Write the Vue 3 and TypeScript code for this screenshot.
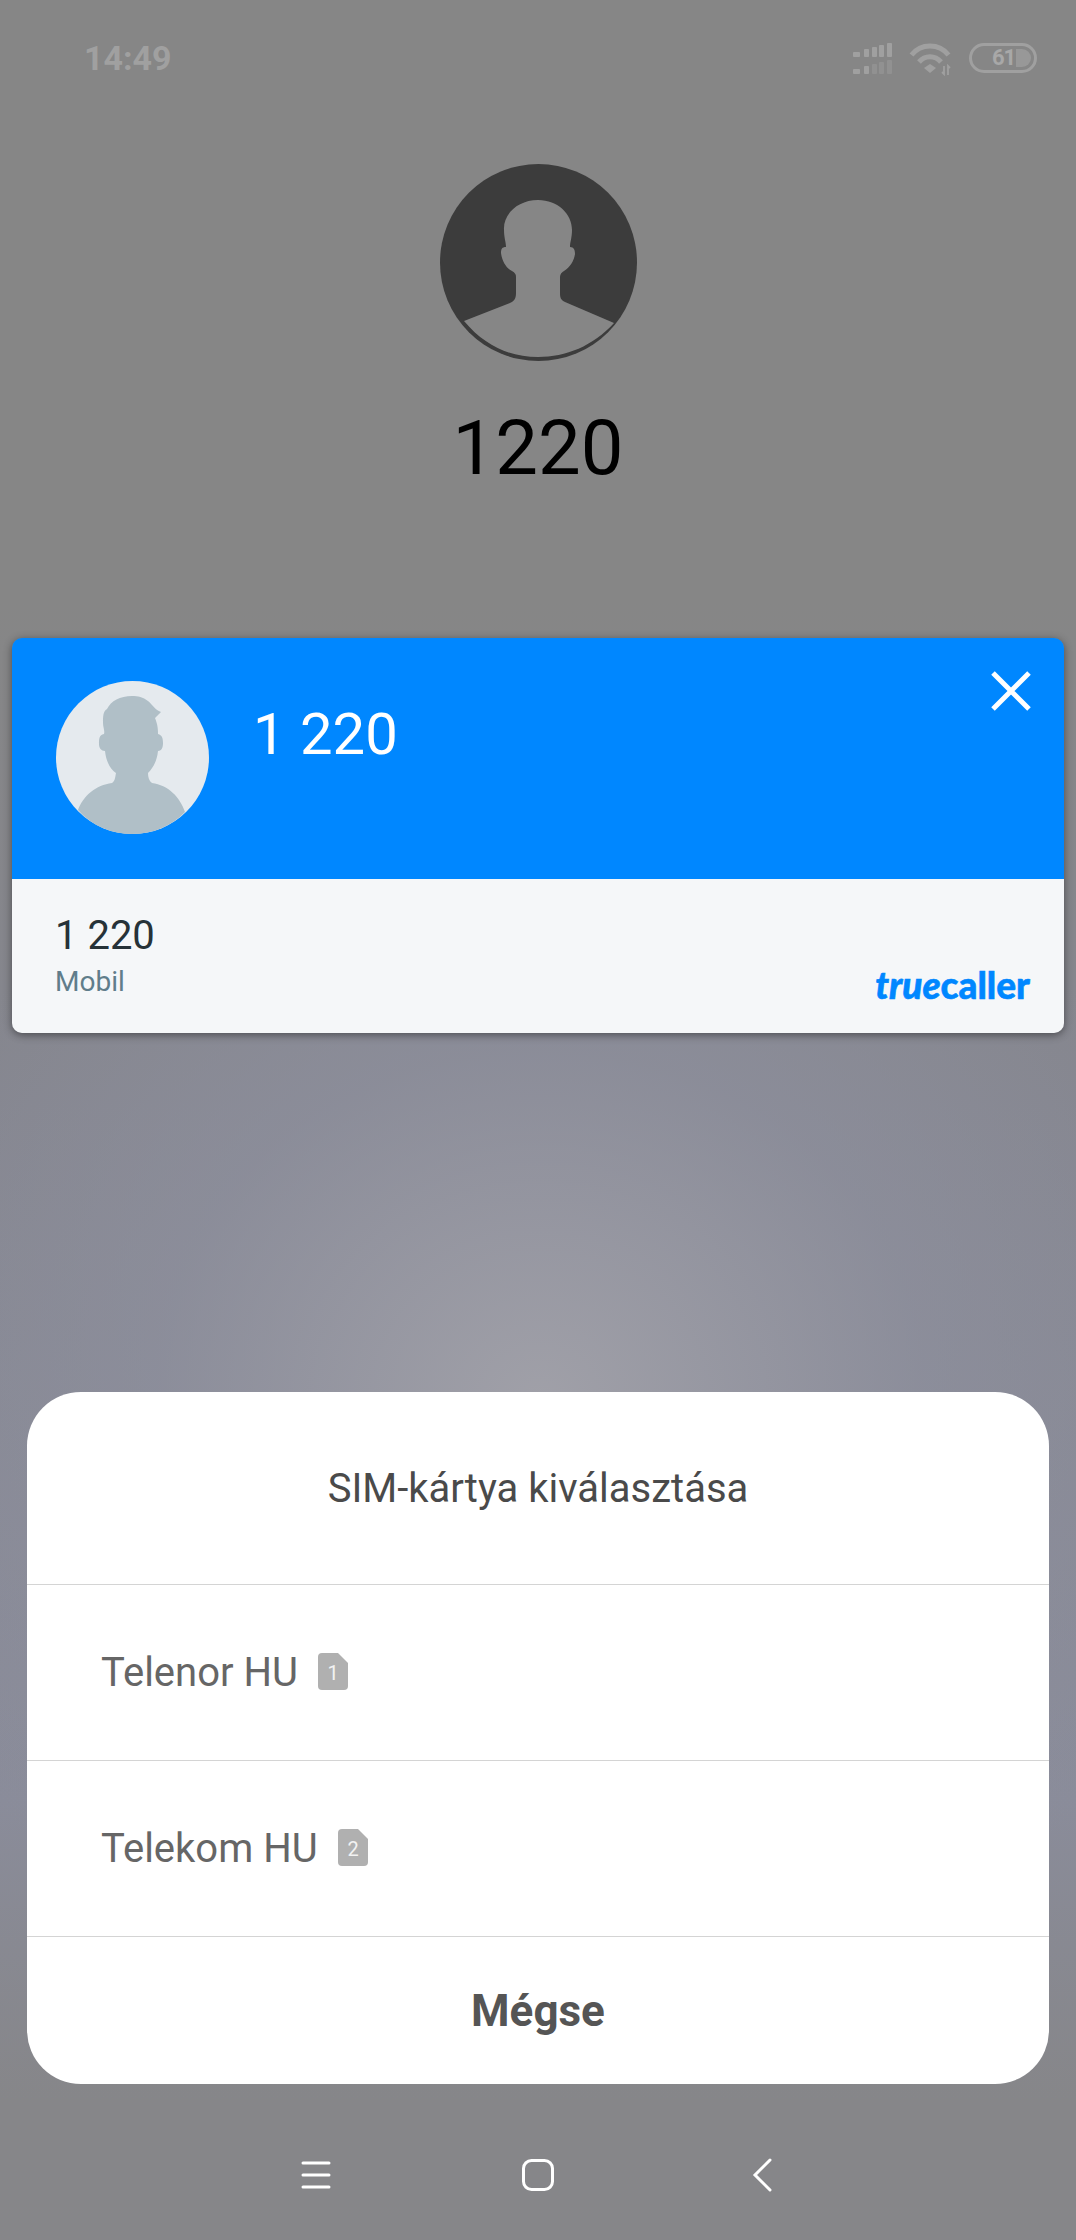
<template>
  <div class="screen">
    <div class="status-bar">
      <span class="clock">14:49</span>
      <div class="status-icons">
        <svg class="signal" width="40" height="32" viewBox="0 0 40 32" fill="#a0a0a0">
          <rect v-for="b in signalBars" :key="'a' + b.x" :x="b.x" :y="14 - b.h" :width="b.w" :height="b.h" rx="1" />
          <rect v-for="b in signalBars" :key="'b' + b.x" :x="b.x" :y="31 - b.h" :width="b.w" :height="b.h" rx="1" :opacity="b.x > 16 ? 0.45 : 1" />
        </svg>
        <svg class="wifi" width="44" height="34" viewBox="0 0 44 34" fill="none" stroke="#a0a0a0" stroke-width="5">
          <path d="M2.5 12C12 0 30 0 39.5 12" />
          <path d="M10 19C16 12 26 12 32 19" />
          <path d="M15 25L21 21L27 25L21 30Z" fill="#a0a0a0" stroke="none" />
          <path d="M35 23v8l-2 -2M39 32v-9l2 2" stroke-width="1.8" />
        </svg>
        <div class="battery">
          <span class="battery-fill"></span>
          <span class="battery-num">61</span>
        </div>
      </div>
    </div>

    <div class="caller">
      <svg class="caller-avatar" width="197" height="197" viewBox="0 0 197 197">
        <circle cx="98.5" cy="98.5" r="98.5" fill="#3c3c3c" />
        <path fill="#868686" d="M98 36C78 36 63 50 64 66C64 74 66 78 66 83C62 83 61 85 61 89C62 97 66 104 72 107C75 109 76 110 76 113V129C76 135 74 137 70 139L24 157C45 182 70 193 98 193C126 193 153 182 174 159L125 138C121 136 120 134 120 129V113C120 110 122 108 124 107C130 103 134 97 135 90C135 86 134 83 130 83C130 78 132 74 132 66C132 50 118 36 98 36Z" />
      </svg>
      <div class="caller-number">1220</div>
    </div>

    <div class="tc-card">
      <div class="tc-head">
        <svg class="tc-avatar" width="153" height="153" viewBox="0 0 153 153">
          <circle cx="76.5" cy="76.5" r="76.5" fill="#e5eaee" />
          <path fill="#b0bfc7" d="M76 15C64 15 55 20 51 28C47 30 47 36 47 42C47 46 49 50 48 53C43 54 43 58 43 63C43 67 45 70 49 70C50 80 54 88 60 92C59 97 59 100 56 102C40 104 27 115 22 129C36 145 56 153 76 153C97 153 116 145 129 131C124 116 112 104 96 102C93 100 92 96 92 92C97 87 101 80 102 70C106 70 107 66 107 62C107 57 106 54 102 53C102 46 101 42 99 37L105 31C99 29 97 24 92 20C87 16 82 15 76 15Z" />
        </svg>
        <span class="tc-name">1 220</span>
        <svg class="tc-close" width="40" height="40" viewBox="0 0 40 40" stroke="#fff" stroke-width="5">
          <path d="M2 2L38 38M38 2L2 38" />
        </svg>
      </div>
      <div class="tc-body">
        <div>
          <div class="tc-phone">1 220</div>
          <div class="tc-type">Mobil</div>
        </div>
        <span class="tc-logo"><i>true</i>caller</span>
      </div>
    </div>

    <div class="sim-dialog">
      <div class="sim-title">SIM-kártya kiválasztása</div>
      <div v-for="sim in sims" :key="sim.slot" class="sim-row">
        <span>{{ sim.name }}</span>
        <svg class="sim-badge" width="30" height="37" viewBox="0 0 30 37">
          <path fill="#b0b0b0" d="M4 0H20L30 10V33Q30 37 26 37H4Q0 37 0 33V4Q0 0 4 0Z" />
          <text x="15" y="27" text-anchor="middle" font-size="20" fill="#f2f2f2">{{ sim.slot }}</text>
        </svg>
      </div>
      <div class="sim-cancel">Mégse</div>
    </div>

    <div class="nav-bar">
      <svg width="30" height="28" viewBox="0 0 30 28" stroke="#fff" stroke-width="3" stroke-linecap="round">
        <path d="M2 2H28M2 14H28M2 26H28" />
      </svg>
      <svg width="32" height="32" viewBox="0 0 32 32" fill="none" stroke="#fff" stroke-width="3">
        <rect x="1.5" y="1.5" width="29" height="29" rx="8" />
      </svg>
      <svg width="20" height="34" viewBox="0 0 20 34" fill="none" stroke="#fff" stroke-width="3" stroke-linecap="round">
        <path d="M18 2L3 17L18 32" />
      </svg>
    </div>
  </div>
</template>

<script setup lang="ts">
const signalBars = [
  { x: 0, w: 7, h: 5 },
  { x: 11, w: 5, h: 8 },
  { x: 19, w: 5, h: 10 },
  { x: 26, w: 5, h: 12 },
  { x: 34, w: 5, h: 14 },
]

const sims = [
  { name: 'Telenor HU', slot: 1 },
  { name: 'Telekom HU', slot: 2 },
]
</script>

<style>
html, body { margin: 0; padding: 0; }
</style>

<style scoped>
.screen {
  width: 1076px; height: 2240px; overflow: hidden;
  display: flex; flex-direction: column; box-sizing: border-box;
  font-family: Roboto, "Liberation Sans", sans-serif;
  background:
    radial-gradient(ellipse 700px 640px at 540px 1400px, #a0a0a8 0%, rgba(142, 144, 158, 0.65) 55%, rgba(134, 135, 145, 0) 100%),
    linear-gradient(#868686 0, #868686 600px, #85868f 1100px, #8a8c9a 1800px, #868689 2100px);
}

.status-bar {
  height: 118px; flex: none; box-sizing: border-box;
  display: flex; justify-content: space-between; align-items: flex-start;
  padding: 38px 39px 0 84px;
}
.clock { font-size: 34px; font-weight: 700; line-height: 40px; color: #a0a0a0; }
.status-icons { display: flex; align-items: flex-start; padding-top: 5px; gap: 16px; }
.battery {
  position: relative; width: 68px; height: 30px; box-sizing: border-box;
  border: 3px solid #a0a0a0; border-radius: 15px;
}
.battery-fill { position: absolute; left: 44px; top: 3px; bottom: 3px; width: 15px; border-radius: 0 9px 9px 0; background: #989898; }
.battery-num {
  position: absolute; left: 20px; top: 0; font-size: 22px; font-weight: 700; line-height: 24px;
  color: #a8a8a8; letter-spacing: -1px;
}

.caller { display: flex; flex-direction: column; align-items: center; padding-top: 46px; height: 474px; box-sizing: border-box; }
.caller-number { font-size: 76px; line-height: 88px; color: #000; margin-top: 43px; }

.tc-card {
  margin: 46px 12px 0; height: 395px; flex: none; border-radius: 10px; overflow: hidden;
  box-shadow: 0 2px 8px rgba(0, 0, 0, 0.45);
}
.tc-head {
  position: relative; height: 241px; box-sizing: border-box; background: #0087ff;
  display: flex; align-items: flex-start; padding: 43px 0 0 44px;
}
.tc-name { font-size: 58px; line-height: 68px; color: #fff; margin: 19px 0 0 44px; }
.tc-close { position: absolute; right: 33px; top: 33px; }
.tc-body {
  height: 154px; box-sizing: border-box; background: #f5f7f9;
  display: flex; justify-content: space-between; align-items: flex-start; padding: 33px 34px 0 43px;
}
.tc-phone { font-size: 40px; line-height: 48px; color: #263238; }
.tc-type { font-size: 28px; line-height: 34px; color: #607d8b; margin-top: 5px; }
.tc-logo {
  margin-top: 51px; font-family: Lato, sans-serif; font-size: 37px; font-weight: 900; line-height: 44px;
  color: #0087ff; letter-spacing: 0; -webkit-text-stroke: 0.6px #0087ff;
}
.tc-logo i { font-style: italic; }

.sim-dialog {
  margin: 359px 27px 0; height: 692px; flex: none; border-radius: 54px; overflow: hidden;
  background: #fff; display: flex; flex-direction: column;
}
.sim-title {
  height: 192px; flex: none; box-sizing: border-box; padding-top: 73px;
  text-align: center; font-size: 40px; line-height: 48px; color: #4a4a4a;
}
.sim-row {
  height: 176px; flex: none; box-sizing: border-box; border-top: 1px solid #d4d4d4;
  display: flex; align-items: center; gap: 20px; padding-left: 74px;
  font-size: 40px; color: #666;
}
.sim-badge { margin-top: -3px; }
.sim-cancel {
  flex: 1; border-top: 1px solid #d4d4d4; display: flex; align-items: center; justify-content: center;
  font-size: 44px; font-weight: 700; color: #555;
}

.nav-bar {
  flex: none; height: 156px; box-sizing: border-box; padding: 75px 0 0 301px;
  display: flex; align-items: flex-start; gap: 187px;
}
.nav-bar svg:first-child { margin-top: 2px; }
.nav-bar svg:nth-child(2) { margin-left: 4px; }
.nav-bar svg:last-child { margin-left: 11px; margin-top: -1px; }
</style>
